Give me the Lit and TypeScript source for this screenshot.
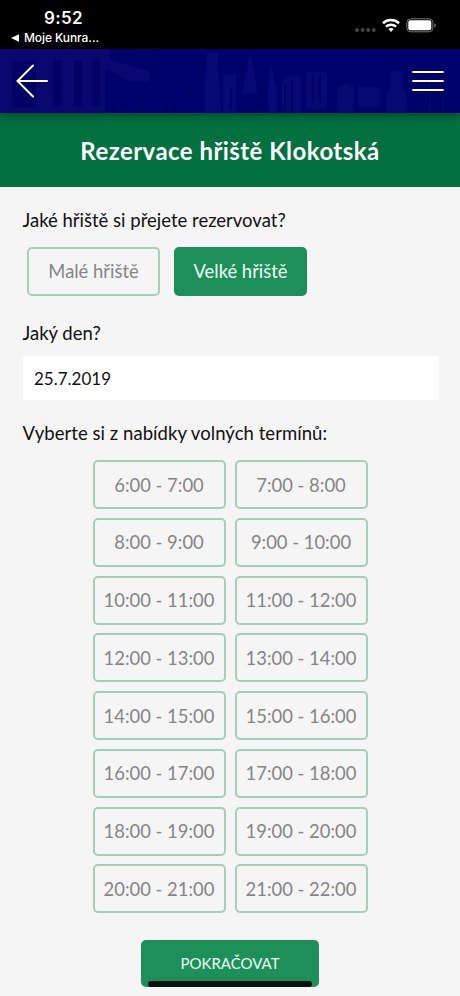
import { LitElement, html, css, svg } from "lit";
import { customElement, state } from "lit/decorators.js";
import { classMap } from "lit/directives/class-map.js";

@customElement("status-bar")
class StatusBar extends LitElement {
  static styles = css`
    :host { display: flex; justify-content: space-between; height: 49px; background: #000; color: #fff; font-family: Inter, sans-serif; }
    .left { display: flex; flex-direction: column; padding: 7px 0 0 11px; }
    .time { font-size: 17px; font-weight: 600; line-height: 22px; padding-left: 33px; letter-spacing: 0.35px; }
    .back { display: flex; align-items: center; gap: 5px; font-size: 12px; line-height: 18px; letter-spacing: -0.08px; font-weight: 500; }
    .right { padding: 17px 23px 0 0; }
    svg { display: block; }
  `;
  render() {
    return html`
      <div class="left">
        <div class="time">9:52</div>
        <div class="back">
          <svg width="8" height="8" viewBox="0 0 8 8"><path d="M0 4L8 .2V7.8Z" fill="#fff" /></svg>
          <span>Moje Kunra...</span>
        </div>
      </div>
      <div class="right">
        <svg width="82" height="18" viewBox="0 0 82 18">
          <g fill="#444"><circle cx="2" cy="13" r="2" /><circle cx="7.6" cy="13" r="2" /><circle cx="13.2" cy="13" r="2" /><circle cx="18.8" cy="13" r="2" /></g>
          <g fill="none" stroke="#fff" stroke-width="2.5"><path d="M27.9 6.2a12.2 12.2 0 0 1 16.2 0" /><path d="M30.9 9.6a7.7 7.7 0 0 1 10.2 0" /></g>
          <path d="M33.3 12.1a4.1 4.1 0 0 1 5.4 0L36 14.9Z" fill="#fff" />
          <rect x="51.9" y="1.8" width="26" height="13" rx="3.8" fill="none" stroke="#777" stroke-width="1" />
          <rect x="53.3" y="3.3" width="23" height="10" rx="2" fill="#fff" />
          <path d="M79.4 6.2c2 .8 2 3.6 0 4.4Z" fill="#777" />
        </svg>
      </div>`;
  }
}

@customElement("nav-header")
class NavHeader extends LitElement {
  static styles = css`
    :host { display: grid; height: 64px; position: relative; z-index: 1; background: #00006b; box-shadow: 0 2px 9px rgba(0, 0, 0, 0.42); }
    .town, .bar { grid-area: 1 / 1; }
    .town { display: block; opacity: 0.65; }
    .bar { z-index: 1; display: flex; justify-content: space-between; align-items: center; padding: 0 16px; }
  `;
  render() {
    const windows = [12, 53, 74, 92];
    return html`
      <svg class="town" width="460" height="64" viewBox="0 0 460 64">
        <defs><filter id="soft"><feGaussianBlur stdDeviation="0.9" /></filter></defs>
        <g filter="url(#soft)">
          <path d="M-4 -4H110V10L150 22V68H-4Z" fill="#070773" />
          <path d="M110 -4H464V8L420 12 400 5 350 16 315 9 260 11 225 3 180 7 150 3Z" fill="#040474" />
          ${windows.map((x) => svg`<rect x=${x} y=${x === 12 ? 12 : 11} width=${x === 12 ? 24 : 8} height="46" fill="#000062" />`)}
          <path d="M105 20L128 32H205V68H105Z" fill="#050570" />
          <path d="M207 4H218V24L222 68H205V30ZM223 25H236V68H223ZM242 45L246 25 250 3 255 26 257 45ZM268 68V40L271 12 275 36H277V68Z" fill="#0e0e7e" />
          <path d="M282 32L290 25 301 28V68H282ZM306 23H327V60H306ZM337 37L345 34 354 37V68H337ZM358 38H380V58H358ZM390 22H403V38L407 46V68H386V46L390 38Z" fill="#080876" />
          <path d="M115 35V62M123 38V57M135 36V63M142 36V60M165 35V62M173 42V63M190 38V60M231 38V60M285 36V62M292 32V62M313 26V54M320 26V54" stroke="#02025e" stroke-width="1.5" />
          <path d="M297 28V61M310 25V58M325 24V58M391 22V36M402 22V36M430 28V61M443 35V60M208 31V61M227 34V59" stroke="#0e0e80" />
        </g>
      </svg>
      <div class="bar">
        <svg width="32" height="34" viewBox="0 0 32 34" fill="none" stroke="#fff" stroke-width="2" stroke-linecap="round"><path d="M1.5 17H31M17 1.5L1.5 17 17 32.5" /></svg>
        <svg width="32" height="22" viewBox="0 0 32 22" stroke="#fff" stroke-width="2.2" stroke-linecap="round"><path d="M1.2 2H30.8M1.2 11H30.8M1.2 20H30.8" /></svg>
      </div>`;
  }
}

@customElement("app-root")
class AppRoot extends LitElement {
  static styles = css`
    :host { display: flex; flex-direction: column; height: 996px; overflow: hidden; background: #f5f5f5; color: #111; font-family: Lato, sans-serif; position: relative; }
    h1 { margin: 0; height: 73.5px; background: #03703f; color: #fff; text-align: center; font-size: 24px; line-height: 75px; font-weight: 700; letter-spacing: 0.45px; }
    main { display: flex; flex-direction: column; padding: 20px 22.5px 0; }
    .label { font-size: 18.5px; line-height: 26px; white-space: nowrap; }
    .q3 { letter-spacing: 0.05px; }
    .fields { display: flex; gap: 14px; padding: 14px 4.5px 0; margin-bottom: 24.4px; }
    button { font: inherit; box-sizing: border-box; width: 133px; height: 49px; padding: 0; border: 2px solid #a1cfba; border-radius: 5px; background: transparent; color: #858585; font-size: 18.4px; white-space: nowrap; }
    button.on { background: #1c9058; border-color: #1c9058; color: #effff5; }
    .date { height: 44px; box-sizing: border-box; margin: 10px 0 20.6px; padding-left: 11.5px; background: #fff; font-size: 17px; line-height: 45px; }
    .slots { display: grid; grid-template-columns: 133px 133px; gap: 8.75px 9px; justify-content: center; padding-top: 13.6px; }
    button.slot { font-size: 18.4px; }
    button.next { align-self: center; width: 178px; height: 47px; margin-top: 26.2px; font-size: 15px; }
    .home { position: absolute; left: 148px; top: 981px; width: 164px; height: 5.5px; border-radius: 3px; background: #0b0f0d; }
  `;
  @state() private field = "Velké hřiště";
  render() {
    const slots = Array.from({ length: 16 }, (_, i) => `${i + 6}:00 - ${i + 7}:00`);
    return html`
      <status-bar></status-bar>
      <nav-header></nav-header>
      <h1>Rezervace hřiště Klokotská</h1>
      <main>
        <div class="label">Jaké hřiště si přejete rezervovat?</div>
        <div class="fields">
          ${["Malé hřiště", "Velké hřiště"].map((f) => html`<button class=${classMap({ on: f === this.field })} @click=${() => (this.field = f)}>${f}</button>`)}
        </div>
        <div class="label">Jaký den?</div>
        <div class="date">25.7.2019</div>
        <div class="label q3">Vyberte si z nabídky volných termínů:</div>
        <div class="slots">${slots.map((s) => html`<button class="slot">${s}</button>`)}</div>
        <button class="on next">POKRAČOVAT</button>
      </main>
      <div class="home"></div>`;
  }
}
